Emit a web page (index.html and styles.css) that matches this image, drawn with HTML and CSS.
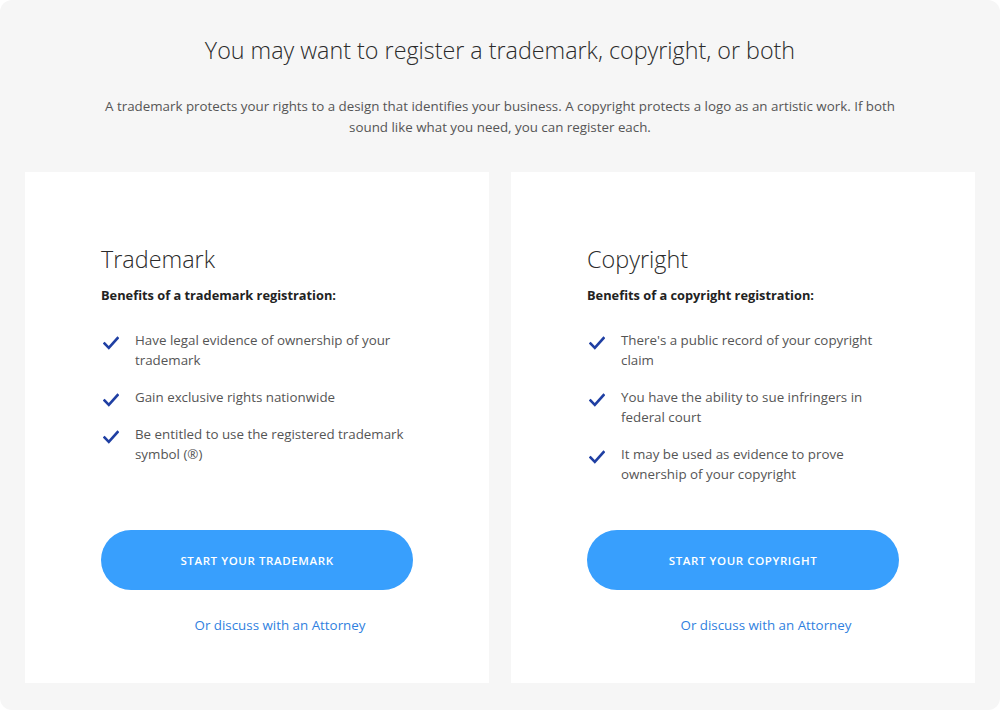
FILE: index.html
```html
<!DOCTYPE html>
<html lang="en">
<head>
<meta charset="utf-8">
<link rel="stylesheet" href="styles.css">
</head>
<body>
<div class="page">
  <h1 class="title">You may want to register a trademark, copyright, or both</h1>
  <p class="intro">A trademark protects your rights to a design that identifies your business. A copyright protects a logo as an artistic work. If both sound like what you need, you can register each.</p>
  <div class="cards">
    <div class="card">
      <h2 class="card-title">Trademark</h2>
      <div class="card-sub">Benefits of a trademark registration:</div>
      <ul class="benefits">
        <li><svg class="check" viewBox="0 0 16 14"><path d="M1.5 7.5 L5.8 11.8 L14.5 2.2" fill="none" stroke="#1f3fa3" stroke-width="2.6" stroke-linecap="square"/></svg><span>Have legal evidence of ownership of your trademark</span></li>
        <li><svg class="check" viewBox="0 0 16 14"><path d="M1.5 7.5 L5.8 11.8 L14.5 2.2" fill="none" stroke="#1f3fa3" stroke-width="2.6" stroke-linecap="square"/></svg><span>Gain exclusive rights nationwide</span></li>
        <li><svg class="check" viewBox="0 0 16 14"><path d="M1.5 7.5 L5.8 11.8 L14.5 2.2" fill="none" stroke="#1f3fa3" stroke-width="2.6" stroke-linecap="square"/></svg><span>Be entitled to use the registered trademark symbol (®)</span></li>
      </ul>
      <div class="actions">
        <a class="btn" href="#">Start your trademark</a>
        <a class="link" href="#">Or discuss with an Attorney</a>
      </div>
    </div>
    <div class="card">
      <h2 class="card-title">Copyright</h2>
      <div class="card-sub">Benefits of a copyright registration:</div>
      <ul class="benefits">
        <li><svg class="check" viewBox="0 0 16 14"><path d="M1.5 7.5 L5.8 11.8 L14.5 2.2" fill="none" stroke="#1f3fa3" stroke-width="2.6" stroke-linecap="square"/></svg><span>There's a public record of your copyright claim</span></li>
        <li><svg class="check" viewBox="0 0 16 14"><path d="M1.5 7.5 L5.8 11.8 L14.5 2.2" fill="none" stroke="#1f3fa3" stroke-width="2.6" stroke-linecap="square"/></svg><span>You have the ability to sue infringers in federal court</span></li>
        <li><svg class="check" viewBox="0 0 16 14"><path d="M1.5 7.5 L5.8 11.8 L14.5 2.2" fill="none" stroke="#1f3fa3" stroke-width="2.6" stroke-linecap="square"/></svg><span>It may be used as evidence to prove ownership of your copyright</span></li>
      </ul>
      <div class="actions">
        <a class="btn" href="#">Start your copyright</a>
        <a class="link" href="#">Or discuss with an Attorney</a>
      </div>
    </div>
  </div>
</div>
</body>
</html>
```
FILE: styles.css
```css
html, body {
  margin: 0;
  padding: 0;
  background: #ffffff;
}
body {
  font-family: "Open Sans", "Liberation Sans", sans-serif;
  color: #333;
}
.page {
  width: 1000px;
  height: 710px;
  box-sizing: border-box;
  background: #f6f6f6;
  border-radius: 12px;
  padding: 32px 25px 27px;
  display: flex;
  flex-direction: column;
}
.title {
  margin: 0;
  font-size: 23.3px;
  line-height: 36px;
  font-weight: 300;
  color: #2b2b2b;
  text-align: center;
}
.intro {
  margin: 28px auto 0;
  max-width: 800px;
  font-size: 13.35px;
  line-height: 21px;
  color: #555;
  text-align: center;
}
.cards {
  margin-top: 34px;
  display: flex;
  gap: 22px;
  flex: 1;
}
.card {
  flex: 1;
  background: #fff;
  padding: 71px 76px 48px;
  display: flex;
  flex-direction: column;
}
.card-title {
  margin: 0;
  font-size: 23.4px;
  line-height: 32px;
  font-weight: 300;
  color: #2b2b2b;
}
.card-sub {
  margin-top: 10px;
  font-size: 12.8px;
  line-height: 20px;
  font-weight: 700;
  color: #222;
}
.benefits {
  list-style: none;
  margin: 25px 0 0;
  padding: 0;
  display: flex;
  flex-direction: column;
  gap: 17px;
}
.benefits li {
  display: flex;
  align-items: flex-start;
  font-size: 13.35px;
  line-height: 20px;
  color: #555;
}
.check {
  width: 16px;
  height: 14px;
  flex: none;
  margin: 6px 16px 0 2px;
}
.actions {
  margin-top: auto;
  display: flex;
  flex-direction: column;
}
.btn {
  display: flex;
  align-items: center;
  justify-content: center;
  height: 60px;
  border-radius: 30px;
  background: #389ffd;
  color: #fff;
  text-decoration: none;
  text-transform: uppercase;
  font-size: 11.5px;
  font-weight: 600;
  letter-spacing: 0.6px;
}
.link {
  margin-top: 25px;
  padding-left: 46px;
  text-align: center;
  font-size: 13.35px;
  line-height: 20px;
  color: #2f7fe0;
  text-decoration: none;
}
```
